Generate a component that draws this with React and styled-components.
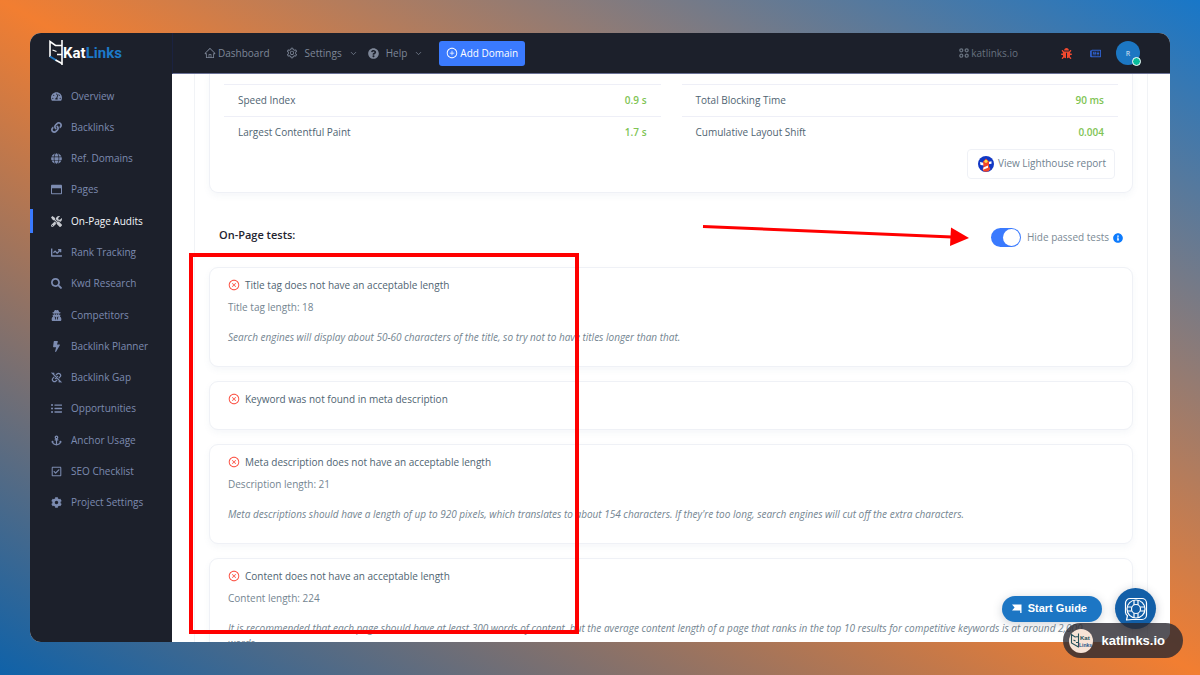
import React, { useState } from "react";
import styled, { createGlobalStyle, css } from "styled-components";
import {
  FaTachometerAlt,
  FaLink,
  FaGlobe,
  FaRegWindowMaximize,
  FaTools,
  FaChartLine,
  FaSearch,
  FaUserSecret,
  FaBolt,
  FaListUl,
  FaAnchor,
  FaRegCheckSquare,
  FaCog,
  FaQuestionCircle,
  FaBug,
  FaRegNewspaper,
  FaInfoCircle,
} from "react-icons/fa";
import { FiChevronDown } from "react-icons/fi";
import {
  AiOutlineHome,
  AiOutlineSetting,
  AiOutlinePlusCircle,
  AiOutlineCloseCircle,
} from "react-icons/ai";

const GapIcon = () => (
  <svg viewBox="0 0 12 12" fill="none" aria-hidden="true">
    <g stroke="currentColor" strokeWidth="1.300" strokeLinecap="round">
      <path d="M5.600 3.200l1-1a2.250 2.250 0 0 1 3.200 3.200l-1 1" />
      <path d="M6.400 8.800l-1 1a2.250 2.250 0 0 1-3.200-3.200l1-1" />
      <path d="M1 1l10 10M4.700 7.300l2.600-2.600M9 10.800l0-1.300M3 1.200v1.300" />
    </g>
  </svg>
);

const menu = [
  { label: "Overview", icon: FaTachometerAlt },
  { label: "Backlinks", icon: FaLink },
  { label: "Ref. Domains", icon: FaGlobe },
  { label: "Pages", icon: FaRegWindowMaximize },
  { label: "On-Page Audits", icon: FaTools, active: true },
  { label: "Rank Tracking", icon: FaChartLine },
  { label: "Kwd Research", icon: FaSearch },
  { label: "Competitors", icon: FaUserSecret },
  { label: "Backlink Planner", icon: FaBolt },
  { label: "Backlink Gap", icon: GapIcon },
  { label: "Opportunities", icon: FaListUl },
  { label: "Anchor Usage", icon: FaAnchor },
  { label: "SEO Checklist", icon: FaRegCheckSquare },
  { label: "Project Settings", icon: FaCog },
];

const metrics = [
  [
    { name: "Speed Index", value: "0.9 s" },
    { name: "Largest Contentful Paint", value: "1.7 s" },
  ],
  [
    { name: "Total Blocking Time", value: "90 ms" },
    { name: "Cumulative Layout Shift", value: "0.004" },
  ],
];

const tests = [
  {
    title: "Title tag does not have an acceptable length",
    detail: "Title tag length: 18",
    hint: "Search engines will display about 50-60 characters of the title, so try not to have titles longer than that.",
  },
  { title: "Keyword was not found in meta description" },
  {
    title: "Meta description does not have an acceptable length",
    detail: "Description length: 21",
    hint: "Meta descriptions should have a length of up to 920 pixels, which translates to about 154 characters. If they're too long, search engines will cut off the extra characters.",
  },
  {
    title: "Content does not have an acceptable length",
    detail: "Content length: 224",
    hint: "It is recommended that each page should have at least 300 words of content, but the average content length of a page that ranks in the top 10 results for competitive keywords is at around 2,000 words.",
  },
];

const CatMark = () => (
  <svg width="14" height="26" viewBox="0 0 14 26" fill="none" aria-hidden="true">
    <path
      d="M13 0v25M13 5.500L6.500 5.500L1 1.500V17"
      stroke="#fff"
      strokeWidth="1.600"
    />
    <path d="M3.500 10l4 1.500M8 14.500h5" stroke="#fff" strokeWidth="1.300" />
    <path d="M1 16.500l6.500 4" stroke="#1c79c8" strokeWidth="2" />
    <path d="M6.500 20l6.500 3.500" stroke="#fff" strokeWidth="1.600" />
  </svg>
);

const GridIcon = () => (
  <svg width="10" height="10" viewBox="0 0 10 10" fill="none" aria-hidden="true">
    <g stroke="currentColor" strokeWidth="1.300">
      <circle cx="2.300" cy="2.300" r="1.500" />
      <circle cx="7.700" cy="2.300" r="1.500" />
      <circle cx="2.300" cy="7.700" r="1.500" />
      <circle cx="7.700" cy="7.700" r="1.500" />
    </g>
  </svg>
);

const LighthouseIcon = () => (
  <svg width="16" height="16" viewBox="0 0 16 16" aria-hidden="true">
    <circle cx="8" cy="8" r="8" fill="#1238c4" />
    <path d="M2 6l4.500 1v2.500L2.500 9z" fill="#fff" />
    <path d="M10 6l3.500-.8v2.600l-3.500.4z" fill="#fff" />
    <path d="M5 5.500L8 2.500l3 3v5l1.500 2.500-2 2.300a8 8 0 0 1-5 0L4.500 13.500l1-3z" fill="#f4452a" />
    <circle cx="8" cy="5.300" r="1.600" fill="#ffd84a" />
    <path d="M5.500 11.500l4.500-2v2.200l-5 2z" fill="#fff" />
  </svg>
);

const FlagIcon = () => (
  <svg width="10" height="9" viewBox="0 0 10 9" fill="#fff" aria-hidden="true">
    <path d="M0 .5h9.500V9H8.200V6.500H0L2.600 3.500z" />
  </svg>
);

const LifebuoyIcon = () => (
  <svg width="24" height="24" viewBox="0 0 24 24" fill="none" aria-hidden="true">
    <g stroke="#fff" strokeWidth="1.200" strokeLinejoin="round">
      <path d="M6 1.500h12a4.500 4.500 0 0 1 4.500 4.500v12a4.500 4.500 0 0 1-4.500 4.500H8l-5.500.5 1-4.500a4 4 0 0 1-2-3V6A4.500 4.500 0 0 1 6 1.500z" />
      <circle cx="12" cy="12" r="9" />
      <circle cx="12" cy="12" r="4.500" />
      <path d="M10 3.200v4.700M14 3.200v4.700M10 16.100v4.700M14 16.100v4.700M3.200 10h4.700M3.200 14h4.700M16.100 10h4.700M16.100 14h4.700" />
    </g>
  </svg>
);

const BadgeLogo = () => (
  <svg width="24" height="24" viewBox="0 0 24 24" fill="none" aria-hidden="true">
    <circle cx="12" cy="12" r="12" fill="#f7e3d6" />
    <path
      d="M9.500 4.500v14M9.500 7.500L6 8 2.500 5.500V14l7 4M4.500 11l2 1M7 13.500h2.500"
      stroke="#26505a"
      strokeWidth="1.100"
    />
    <text x="11" y="11" fontSize="6" fontWeight="700" fill="#26505a">
      Kat
    </text>
    <text x="10" y="18" fontSize="5" fontWeight="700" fill="#234f86">
      Links
    </text>
  </svg>
);

export default function App() {
  const [hidePassed, setHidePassed] = useState(true);

  return (
    <Page>
      <GlobalStyle />
      <Window>
        <Sidebar>
          <Logo href="#">
            <CatMark />
            <LogoText>
              Kat<LogoAccent>Links</LogoAccent>
            </LogoText>
          </Logo>
          <Menu>
            {menu.map(({ label, icon: Icon, active }) => (
              <li key={label}>
                <MenuLink href="#" $active={active}>
                  <Icon />
                  {label}
                </MenuLink>
              </li>
            ))}
          </Menu>
        </Sidebar>

        <Main>
          <TopBar>
            <TopNav>
              <TopLink href="#">
                <AiOutlineHome size={12} />
                Dashboard
              </TopLink>
              <TopButton type="button">
                <AiOutlineSetting size={12} />
                Settings
                <FiChevronDown size={9} />
              </TopButton>
              <TopButton type="button">
                <FaQuestionCircle size={11} />
                Help
                <FiChevronDown size={9} />
              </TopButton>
              <AddButton type="button">
                <AiOutlinePlusCircle size={12} />
                Add Domain
              </AddButton>
            </TopNav>
            <TopTools>
              <DomainLink href="#">
                <GridIcon />
                katlinks.io
              </DomainLink>
              <ToolButton type="button" aria-label="Report a bug" $color="#f1492f">
                <FaBug />
              </ToolButton>
              <ToolButton type="button" aria-label="News" $color="#2f62d0">
                <FaRegNewspaper />
              </ToolButton>
              <Avatar type="button">
                R
                <StatusDot />
              </Avatar>
            </TopTools>
          </TopBar>

          <Content>
            <Panel>
              <MetricsCard>
                <MetricsGrid>
                  {metrics.map((column, i) => (
                    <MetricTable key={i}>
                      <tbody>
                        {column.map(({ name, value }) => (
                          <tr key={name}>
                            <MetricName scope="row">{name}</MetricName>
                            <MetricValue>{value}</MetricValue>
                          </tr>
                        ))}
                      </tbody>
                    </MetricTable>
                  ))}
                </MetricsGrid>
                <ReportButton type="button">
                  <LighthouseIcon />
                  View Lighthouse report
                </ReportButton>
              </MetricsCard>

              <TestsHeader>
                <TestsTitle>On-Page tests:</TestsTitle>
                <ToggleLabel>
                  <Toggle
                    type="checkbox"
                    checked={hidePassed}
                    onChange={(e) => setHidePassed(e.target.checked)}
                  />
                  Hide passed tests
                  <FaInfoCircle />
                </ToggleLabel>
                <Arrow width="268" height="24" viewBox="0 0 268 24">
                  <path d="M1 4.500L250 15" stroke="#ff0000" strokeWidth="3" />
                  <path d="M249 5.500L267 16L248 24z" fill="#ff0000" />
                </Arrow>
              </TestsHeader>

              <TestList>
                {tests.map(({ title, detail, hint }) => (
                  <TestCard key={title}>
                    <TestTitle>
                      <AiOutlineCloseCircle />
                      {title}
                    </TestTitle>
                    {detail && <TestDetail>{detail}</TestDetail>}
                    {hint && <TestHint>{hint}</TestHint>}
                  </TestCard>
                ))}
                <Highlight />
              </TestList>
            </Panel>
          </Content>
        </Main>
      </Window>

      <Floating>
        <GuideButton type="button">
          <FlagIcon />
          Start Guide
        </GuideButton>
        <HelpButton type="button" aria-label="Support">
          <LifebuoyIcon />
        </HelpButton>
      </Floating>
      <SiteBadge>
        <BadgeLogo />
        katlinks.io
      </SiteBadge>
    </Page>
  );
}

const GlobalStyle = createGlobalStyle`
  *, *::before, *::after {
    box-sizing: border-box;
  }

  body {
    margin: 0;
    font-family: "Open Sans", "Noto Sans", sans-serif;
    font-size: 10px;
    line-height: 15px;
    color: #4f6472;
  }

  button {
    font: inherit;
    border: 0;
    background: none;
    padding: 0;
    cursor: pointer;
  }

  a {
    text-decoration: none;
  }

  svg {
    flex: none;
  }
`;

const Page = styled.div`
  position: relative;
  display: flex;
  height: 100vh;
  padding: 33px 30px;
  overflow: hidden;
  background: linear-gradient(to top right, #0f62a9, #f27e31 50%, #1877c8);
`;

const Window = styled.div`
  display: flex;
  flex: 1;
  overflow: hidden;
  border-radius: 11px;
  background: #fff;
`;

const Sidebar = styled.aside`
  flex: none;
  width: 142px;
  background: #1c202b;
`;

const Logo = styled.a`
  display: flex;
  align-items: center;
  height: 40px;
  padding-left: 19px;
  color: #fff;
`;

const LogoText = styled.span`
  font-family: Roboto, "Liberation Sans", sans-serif;
  font-size: 15px;
  font-weight: 700;
`;

const LogoAccent = styled.span`
  color: #1c79c8;
`;

const Menu = styled.ul`
  display: flex;
  flex-direction: column;
  justify-content: space-between;
  height: 431px;
  margin: 11px 0 0;
  padding: 0;
  list-style: none;
`;

const MenuLink = styled.a`
  display: flex;
  align-items: center;
  gap: 9px;
  height: 24px;
  padding-left: 18px;
  border-left: 3px solid transparent;
  color: #7c8bb0;

  svg {
    width: 11px;
    height: 11px;
  }

  ${({ $active }) =>
    $active &&
    css`
      border-color: #3a7afe;
      color: #f4f6fa;

      svg {
        color: #c6c9cf;
      }
    `}
`;

const Main = styled.div`
  display: flex;
  flex: 1;
  flex-direction: column;
  min-width: 0;
`;

const TopBar = styled.header`
  display: flex;
  flex: none;
  align-items: center;
  justify-content: space-between;
  height: 41px;
  padding: 0 30px 0 31px;
  border-left: 1px solid #1a2240;
  border-bottom: 1px solid #6a7196;
  background: #1c202b;
`;

const TopNav = styled.nav`
  display: flex;
  align-items: center;
`;

const topItem = css`
  display: flex;
  align-items: center;
  color: #7e8798;
`;

const TopLink = styled.a`
  ${topItem}
  gap: 2px;
  margin-right: 16px;
`;

const TopButton = styled.button`
  ${topItem}
  gap: 7px;
  margin-right: 10px;
`;

const AddButton = styled.button`
  display: flex;
  align-items: center;
  gap: 2px;
  height: 25px;
  margin-left: 6px;
  padding: 0 7px;
  border-radius: 3px;
  background: #3a7afe;
  color: #fff;
  font-weight: 500;
`;

const TopTools = styled.div`
  display: flex;
  align-items: center;
`;

const DomainLink = styled.a`
  display: flex;
  align-items: center;
  gap: 2px;
  margin-right: 43px;
  color: #68727f;
`;

const ToolButton = styled.button`
  display: flex;
  margin-right: 18px;
  font-size: 11px;
  color: ${({ $color }) => $color};
`;

const Avatar = styled.button`
  position: relative;
  width: 24px;
  height: 24px;
  margin-left: -3px;
  border-radius: 50%;
  background: #1c77c3;
  color: #b9d3ea;
  font-size: 7px;
  font-weight: 600;
`;

const StatusDot = styled.span`
  position: absolute;
  right: -1px;
  bottom: -1px;
  width: 9px;
  height: 9px;
  border: 1px solid #fff;
  border-radius: 50%;
  background: #09bd9c;
`;

const Content = styled.main`
  flex: 1;
  min-height: 0;
  padding: 0 22px;
  overflow: hidden;
  background: #fff;
`;

const Panel = styled.section`
  padding: 0 14px;
  border: 1px solid #f1f3f6;
  border-width: 0 1px;
`;

const card = css`
  border: 1px solid #eff1f6;
  border-radius: 9px;
  background: #fff;
  box-shadow: 0 3px 6px rgba(120, 135, 165, 0.07);
`;

const MetricsCard = styled.div`
  ${card}
  padding: 10px 14px 13px;
  border-top: 0;
  border-radius: 0 0 9px 9px;
`;

const MetricsGrid = styled.div`
  display: grid;
  grid-template-columns: 1fr 1fr;
  gap: 21px;
`;

const MetricTable = styled.table`
  width: 100%;
  border-collapse: collapse;

  th,
  td {
    height: 32px;
    padding: 0 14px;
    border-top: 1px solid #eeeff7;
  }
`;

const MetricName = styled.th`
  text-align: left;
  font-weight: 500;
`;

const MetricValue = styled.td`
  text-align: right;
  font-weight: 600;
  color: #80c454;
`;

const ReportButton = styled.button`
  display: flex;
  align-items: center;
  gap: 4px;
  height: 30px;
  margin: 0 3px 0 auto;
  padding: 0 8px 0 10px;
  border: 1px solid #eff1f6;
  border-radius: 4px;
  background: #fff;
  color: #6f8290;
`;

const TestsHeader = styled.div`
  position: relative;
  display: flex;
  align-items: center;
  justify-content: space-between;
  height: 20px;
  margin: 35px 10px 19px;
`;

const TestsTitle = styled.h2`
  margin: 0 0 7px;
  font-size: 11px;
  font-weight: 600;
  color: #1f2430;
`;

const ToggleLabel = styled.label`
  display: flex;
  align-items: center;
  gap: 4px;
  color: #7b8a95;

  svg {
    color: #0d7bfd;
    font-size: 10px;
  }
`;

const Toggle = styled.input`
  appearance: none;
  width: 30px;
  height: 19px;
  margin: 0 2px 0 0;
  border-radius: 10px;
  background: #cfd6e2;
  cursor: pointer;

  &::before {
    content: "";
    display: block;
    width: 17px;
    height: 17px;
    margin: 1px;
    border-radius: 50%;
    background: #fff;
  }

  &:checked {
    background: #3a7afe;
  }

  &:checked::before {
    margin-left: 12px;
  }
`;

const Arrow = styled.svg`
  position: absolute;
  top: -6px;
  right: 153px;
`;

const TestList = styled.div`
  position: relative;
  display: flex;
  flex-direction: column;
  gap: 14px;
`;

const TestCard = styled.article`
  ${card}
  min-height: 49px;
  padding: 10px 22px 21px 18px;
`;

const TestTitle = styled.h3`
  display: flex;
  align-items: center;
  gap: 5px;
  margin: 0;
  font-size: 10px;
  font-weight: 500;

  svg {
    font-size: 12px;
    color: #fb4d3f;
  }
`;

const TestDetail = styled.p`
  margin: 7px 0 0;
  color: #748591;
`;

const TestHint = styled.p`
  margin: 15px 0 0;
  font-style: italic;
  color: #748591;
`;

const Highlight = styled.div`
  position: absolute;
  top: -14px;
  left: -20px;
  width: 390px;
  height: 381px;
  border: 4px solid #ff0000;
  pointer-events: none;
`;

const Floating = styled.div`
  position: absolute;
  right: 44px;
  bottom: 46px;
  display: flex;
  align-items: center;
  gap: 13px;
`;

const GuideButton = styled.button`
  display: flex;
  align-items: center;
  gap: 6px;
  height: 26px;
  padding: 0 15px 0 10px;
  border-radius: 13px;
  background: #1c76c4;
  box-shadow: 0 2px 10px rgba(60, 70, 90, 0.25);
  color: #fff;
  font-family: "Liberation Sans", sans-serif;
  font-size: 11px;
  font-weight: 700;
`;

const HelpButton = styled.button`
  display: flex;
  align-items: center;
  justify-content: center;
  width: 41px;
  height: 41px;
  border-radius: 50%;
  background: #125fa8;
  box-shadow: 0 2px 10px rgba(60, 70, 90, 0.3);
`;

const SiteBadge = styled.div`
  position: absolute;
  right: 17px;
  bottom: 17px;
  display: flex;
  align-items: center;
  gap: 8px;
  height: 35px;
  padding: 0 18px 0 6px;
  border-radius: 18px;
  background: rgba(42, 40, 48, 0.8);
  color: #fff;
  font-family: "Liberation Sans", sans-serif;
  font-size: 13px;
  font-weight: 700;
`;
